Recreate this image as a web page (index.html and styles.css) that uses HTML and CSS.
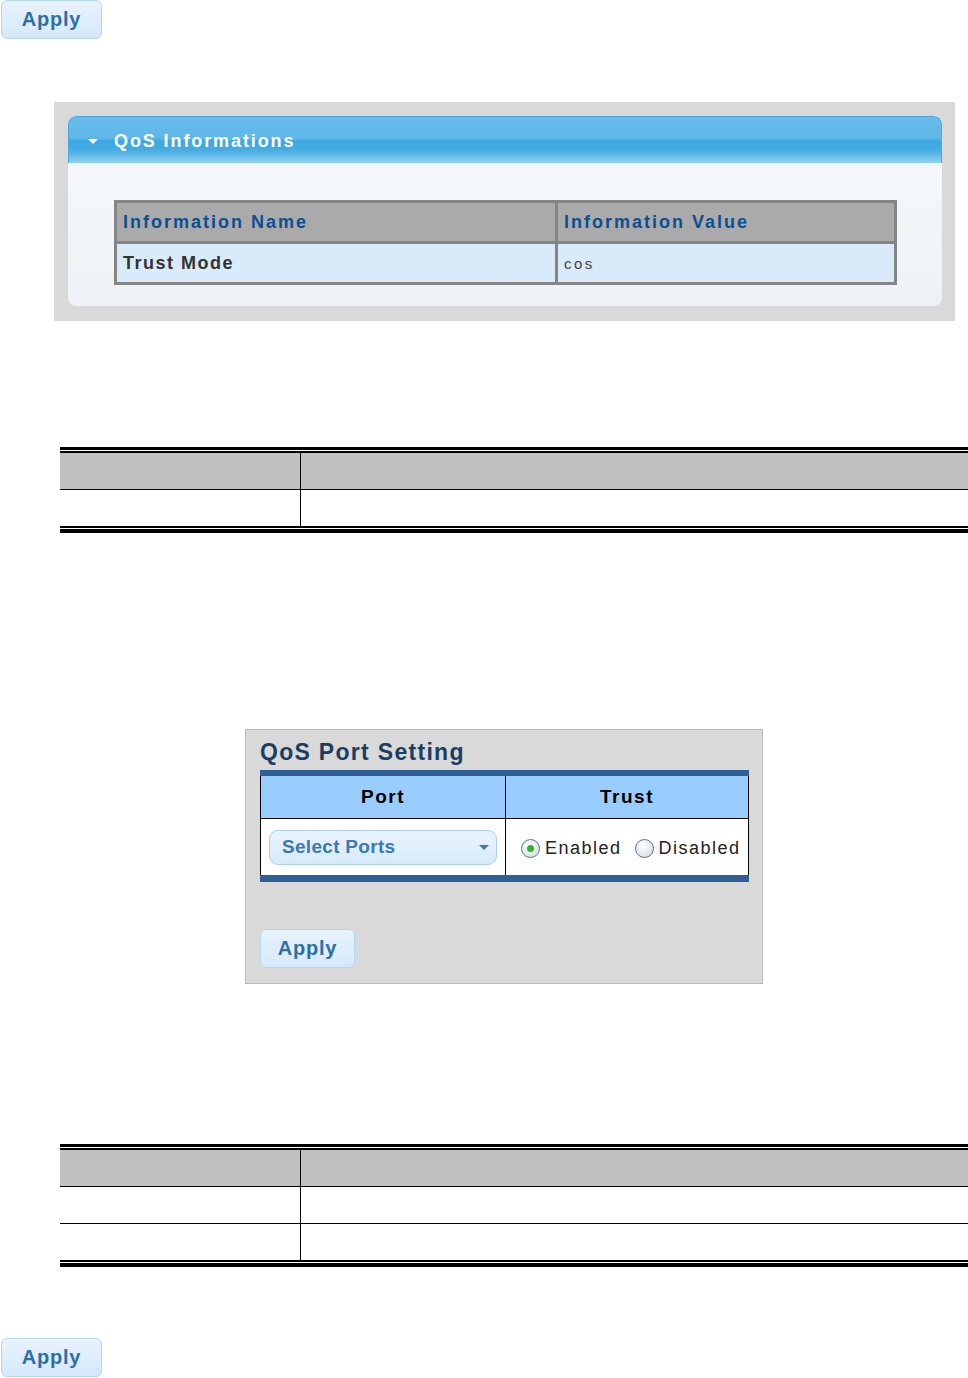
FILE: index.html
```html
<!DOCTYPE html>
<html lang="en">
<head>
    <meta charset="UTF-8">
    <title>QoS Port Setting</title>
    <link rel="stylesheet" href="styles.css">
</head>
<body>
    <div class="page">
        <button class="btn-apply" type="button">Apply</button>

        <div class="info-wrap">
            <div class="info-panel">
                <div class="info-head"><span class="caret"></span>QoS Informations</div>
                <div class="info-body">
                    <table class="info-table">
                        <tr>
                            <th class="col-name">Information Name</th>
                            <th>Information Value</th>
                        </tr>
                        <tr>
                            <td class="col-name">Trust Mode</td>
                            <td class="value">cos</td>
                        </tr>
                    </table>
                </div>
            </div>
        </div>

        <div class="doc doc-first">
            <table class="doc-table">
                <tr class="doc-head"><td class="doc-key"></td><td></td></tr>
                <tr><td class="doc-key"></td><td></td></tr>
            </table>
        </div>

        <div class="port-panel">
            <div class="port-title">QoS Port Setting</div>
            <table class="port-table">
                <tr>
                    <th class="port-col">Port</th>
                    <th>Trust</th>
                </tr>
                <tr>
                    <td class="port-col">
                        <div class="select">
                            <span>Select Ports</span>
                            <span class="select-arrow"></span>
                        </div>
                    </td>
                    <td>
                        <div class="radios">
                            <label class="radio"><span class="dot checked"></span>Enabled</label>
                            <label class="radio"><span class="dot"></span>Disabled</label>
                        </div>
                    </td>
                </tr>
            </table>
            <button class="btn-apply btn-small" type="button">Apply</button>
        </div>

        <div class="doc doc-second">
            <table class="doc-table">
                <tr class="doc-head"><td class="doc-key"></td><td></td></tr>
                <tr><td class="doc-key"></td><td></td></tr>
                <tr><td class="doc-key"></td><td></td></tr>
            </table>
        </div>

        <button class="btn-apply btn-bottom" type="button">Apply</button>
    </div>
</body>
</html>
```

FILE: styles.css
```css
body {
    margin: 0;
    padding: 0;
    background-color: #ffffff;
    font-family: "Liberation Sans", Arial, sans-serif;
    overflow: hidden;
}
.page {
    display: flex;
    flex-direction: column;
    align-items: flex-start;
    width: 968px;
}
.btn-apply {
    width: 101px;
    height: 39px;
    margin-left: 1px;
    background: linear-gradient(#e8f3fd, #d5e8f8);
    border: 1px solid #b6d7f1;
    border-radius: 6px;
    color: #2d6ea8;
    font-family: "Liberation Sans", Arial, sans-serif;
    font-weight: bold;
    font-size: 20px;
    letter-spacing: 0.8px;
    padding: 0;
    cursor: pointer;
}
.info-wrap {
    margin-top: 63px;
    margin-left: 54px;
    width: 901px;
    height: 219px;
    box-sizing: border-box;
    padding: 14px 13px 15px 14px;
    background-color: #d9d9d9;
}
.info-panel {
    height: 190px;
    border-radius: 8px;
    overflow: hidden;
    background: linear-gradient(#f8fafc, #eef2f6);
}
.info-head {
    height: 47px;
    box-sizing: border-box;
    border: 1px solid #4fa6df;
    border-bottom: none;
    border-radius: 8px 8px 0 0;
    background: linear-gradient(#66bbea 0%, #60b8e8 46%, #3ca7e1 52%, #46ade3 72%, #92d1f2 100%);
    color: #ffffff;
    font-weight: bold;
    font-size: 18px;
    letter-spacing: 1.9px;
    display: flex;
    align-items: center;
    padding: 2px 0 0 19px;
}
.caret {
    width: 0;
    height: 0;
    border-left: 5px solid transparent;
    border-right: 5px solid transparent;
    border-top: 5px solid #ffffff;
    margin-right: 16px;
}
.info-body {
    padding: 37px 45px 0 46px;
}
.info-table {
    width: 100%;
    border-collapse: collapse;
    border: 3px solid #858585;
}
.info-table th,
.info-table td {
    height: 38px;
    padding: 0 0 0 6px;
    text-align: left;
    font-size: 18px;
    letter-spacing: 2px;
}
.info-table th {
    background-color: #aaaaaa;
    color: #0b4f92;
    border-bottom: 3px solid #858585;
}
.info-table td {
    background-color: #d9eaf8;
    color: #333333;
    font-weight: bold;
    letter-spacing: 1.5px;
}
.info-table .col-name {
    width: 432px;
    border-right: 3px solid #858585;
}
.info-table td.value {
    font-weight: normal;
    font-size: 15px;
    letter-spacing: 2.5px;
    color: #444444;
}
.doc {
    width: 920px;
    margin-left: 60px;
    border-top: 3px solid #000000;
    border-bottom: 4px solid #000000;
    padding: 1px 0;
}
.doc-first {
    margin-top: 126px;
}
.doc-second {
    margin-top: 160px;
}
.doc-table {
    width: 100%;
    border-collapse: collapse;
    border-top: 2px solid #000000;
    border-bottom: 2px solid #000000;
}
.doc-table td {
    height: 36px;
    padding: 0;
    border-bottom: 1px solid #000000;
}
.doc-table tr:last-child td {
    border-bottom: none;
}
.doc-table .doc-key {
    width: 240px;
    border-right: 1px solid #000000;
}
.doc-head td {
    height: 36px;
    background-color: #c0c0c0;
}
.port-panel {
    margin-top: 196px;
    margin-left: 245px;
    width: 518px;
    height: 255px;
    box-sizing: border-box;
    border: 1px solid #b8b8b8;
    background-color: #d9d9d9;
    padding: 0 14px;
}
.port-title {
    height: 40px;
    box-sizing: border-box;
    padding-top: 9px;
    font-family: "Liberation Sans", Arial, sans-serif;
    font-weight: bold;
    font-size: 23px;
    color: #1c3d63;
    letter-spacing: 1.3px;
}
.port-table {
    width: 489px;
    border-collapse: collapse;
    border-top: 6px solid #2f5f95;
    border-bottom: 7px solid #2f5f95;
    border-left: 1px solid #000000;
    border-right: 1px solid #000000;
}
.port-table th {
    height: 42px;
    padding: 0;
    background-color: #99ccff;
    color: #000000;
    font-size: 19px;
    letter-spacing: 1.5px;
    border-bottom: 1px solid #000000;
}
.port-table td {
    height: 56px;
    padding: 0;
    background-color: #ffffff;
}
.port-table .port-col {
    width: 244px;
    border-right: 1px solid #000000;
}
.select {
    margin-left: 8px;
    width: 228px;
    height: 35px;
    box-sizing: border-box;
    border: 1px solid #a9d0ee;
    border-radius: 9px;
    background: linear-gradient(#e9f4fd, #d7eaf9);
    display: flex;
    align-items: center;
    justify-content: space-between;
    padding: 0 7px 0 12px;
    color: #3b79b3;
    font-weight: bold;
    font-size: 19px;
    letter-spacing: 0.3px;
}
.select-arrow {
    width: 0;
    height: 0;
    border-left: 5px solid transparent;
    border-right: 5px solid transparent;
    border-top: 5px solid #3b79b3;
}
.radios {
    display: flex;
    align-items: center;
    padding: 3px 0 0 15px;
    gap: 13px;
}
.radio {
    display: flex;
    align-items: center;
    font-size: 18px;
    letter-spacing: 1.5px;
    color: #222222;
}
.dot {
    width: 19px;
    height: 19px;
    box-sizing: border-box;
    border: 1px solid #56799c;
    border-radius: 50%;
    background: radial-gradient(circle at 40% 35%, #ffffff, #d4d4d4);
    margin-right: 5px;
    display: flex;
    align-items: center;
    justify-content: center;
}
.dot.checked::after {
    content: "";
    width: 7px;
    height: 7px;
    border-radius: 50%;
    background-color: #2cb52c;
}
.btn-small {
    margin: 47px 0 0 0;
    width: 95px;
}
.btn-bottom {
    margin-top: 71px;
}
```
